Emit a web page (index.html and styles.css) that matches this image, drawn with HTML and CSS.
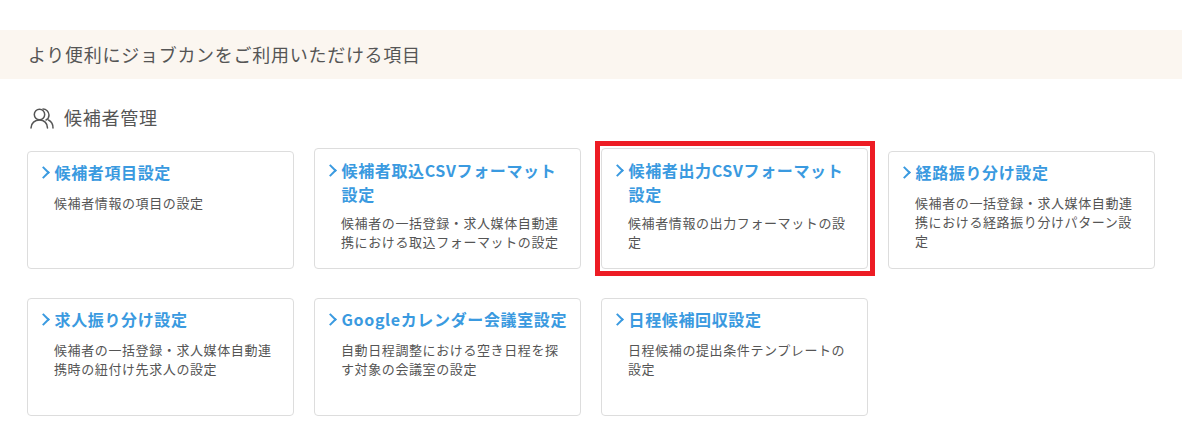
FILE: index.html
```html
<!DOCTYPE html>
<html lang="ja">
<head>
  <meta charset="UTF-8">
  <title>ジョブカン 設定</title>
  <link rel="stylesheet" href="styles.css">
</head>
<body>
  <h2 class="band">より便利にジョブカンをご利用いただける項目</h2>

  <h3 class="group-title">
    <svg class="group-icon" viewBox="0 0 24 21" width="24" height="21" fill="none" stroke="#555" stroke-width="1.5" stroke-linecap="round" stroke-linejoin="round">
      <circle cx="9.500" cy="6.500" r="5.200"/>
      <path d="M1 20c0-5 4-8 8.500-8s8 3 8 8"/>
      <path d="M13 1c3 0 6 2.500 6 6 0 2-1 4-3 5"/>
      <path d="M18.500 12c3 1.500 4.500 4 4.500 8"/>
    </svg>
    候補者管理
  </h3>

  <div class="cards">
    <a class="card low">
      <div class="card-title"><span class="arrow"></span>候補者項目設定</div>
      <p class="card-desc">候補者情報の項目の設定</p>
    </a>
    <a class="card">
      <div class="card-title"><span class="arrow"></span>候補者取込CSVフォーマット設定</div>
      <p class="card-desc">候補者の一括登録・求人媒体自動連携における取込フォーマットの設定</p>
    </a>
    <a class="card marked">
      <div class="card-title"><span class="arrow"></span>候補者出力CSVフォーマット設定</div>
      <p class="card-desc">候補者情報の出力フォーマットの設定</p>
    </a>
    <a class="card low">
      <div class="card-title"><span class="arrow"></span>経路振り分け設定</div>
      <p class="card-desc">候補者の一括登録・求人媒体自動連携における経路振り分けパターン設定</p>
    </a>
    <a class="card low">
      <div class="card-title"><span class="arrow"></span>求人振り分け設定</div>
      <p class="card-desc">候補者の一括登録・求人媒体自動連携時の紐付け先求人の設定</p>
    </a>
    <a class="card low">
      <div class="card-title"><span class="arrow"></span>Googleカレンダー会議室設定</div>
      <p class="card-desc">自動日程調整における空き日程を探す対象の会議室の設定</p>
    </a>
    <a class="card low">
      <div class="card-title"><span class="arrow"></span>日程候補回収設定</div>
      <p class="card-desc">日程候補の提出条件テンプレートの設定</p>
    </a>
  </div>
</body>
</html>
```

FILE: styles.css
```css
* {
  box-sizing: border-box;
}
body {
  margin: 0;
  padding-top: 30px;
  background: #fff;
  color: #555;
  font-family: "Noto Sans CJK JP", "Noto Sans", sans-serif;
  overflow: hidden;
}
.band {
  margin: 0;
  height: 49px;
  padding-left: 28px;
  background: #fbf6f0;
  font-size: 18px;
  font-weight: 400;
  line-height: 49px;
  letter-spacing: 0.72px;
}
.group-title {
  display: flex;
  align-items: center;
  gap: 10px;
  margin: 0;
  height: 30px;
  margin-top: 23px;
  padding-left: 30px;
  font-size: 18px;
  font-weight: 400;
  letter-spacing: 0.72px;
}
.group-icon {
  margin-top: 3px;
}
.cards {
  display: grid;
  grid-template-columns: repeat(4, 267px);
  column-gap: 20px;
  row-gap: 29px;
  align-items: end;
  margin-top: 16px;
  padding-left: 27px;
}
.card {
  display: block;
  position: relative;
  height: 121px;
  padding: 9px 10px 0 14px;
  border: 1px solid #ddd;
  border-radius: 4px;
}
.card.low {
  height: 118px;
  padding-top: 8px;
}
.card.low .card-desc {
  margin-top: 9px;
}
.card.marked::after {
  content: "";
  position: absolute;
  left: -7px;
  right: -8px;
  top: -8px;
  bottom: -8px;
  border: 5px solid #ed1c24;
}
.card-title {
  position: relative;
  padding-left: 12.5px;
  color: #3a9ae0;
  font-size: 16px;
  font-weight: 700;
  line-height: 24px;
  letter-spacing: 0.64px;
}
.arrow {
  position: absolute;
  left: -3.5px;
  top: 8px;
  width: 9px;
  height: 9px;
  border-top: 2px solid #3a9ae0;
  border-right: 2px solid #3a9ae0;
  transform: rotate(45deg);
}
.card-desc {
  margin: 7px 0 0 12px;
  font-size: 13px;
  line-height: 19px;
  letter-spacing: 0.6px;
}
```
